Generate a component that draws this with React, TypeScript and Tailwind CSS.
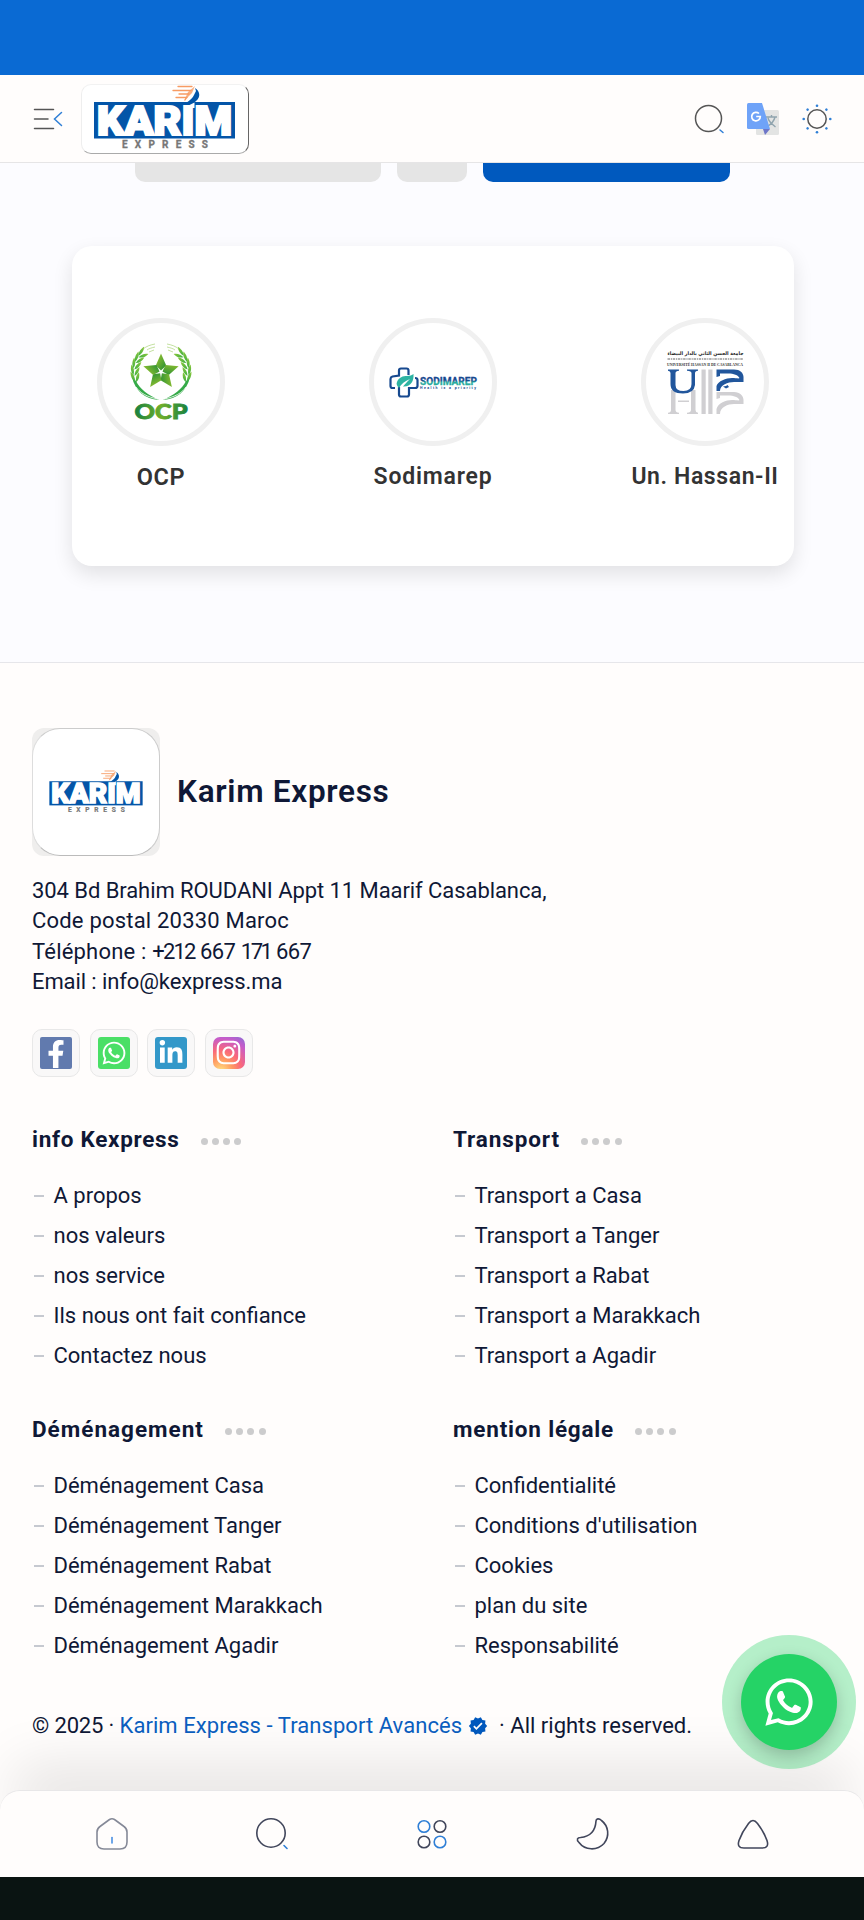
import React from "react";
import { FaFacebookF, FaWhatsapp, FaLinkedinIn, FaInstagram } from "react-icons/fa";
import { MdVerified } from "react-icons/md";

function KarimLogo({ className }: { className: string }) {
  return (
    <svg viewBox="0 0 141 65" className={`overflow-visible ${className}`}>
      <g stroke="#f79b63" strokeWidth="1.3" strokeLinecap="round">
        <path d="M84 1.5H98M79 5.5H97M85 9H95M82 12.5H93M91 15L93 12" />
      </g>
      <path d="M90 16L94 7L101 1L98 8Z" fill="#f79b63" opacity=".8" />
      <path d="M101 3C106 6 107 12 102 16C100 18 98 18 92 18C96 15 99 13 100 10L102 6Z" fill="#0355a8" />
      <rect x="0" y="17" width="141" height="36.5" fill="#0355a8" />
      <text
        x="3"
        y="50.2"
        textLength="135"
        lengthAdjust="spacingAndGlyphs"
        fill="#fff"
        stroke="#fff"
        strokeWidth="2.2"
        className="font-['Roboto'] text-[41px] font-black"
      >
        KARIM
      </text>
      <path d="M91.500 22L100.500 17.500V23H91.500Z" fill="#fff" />
      <text
        x="28"
        y="63.2"
        textLength="86"
        lengthAdjust="spacing"
        fill="#777"
        stroke="#777"
        strokeWidth=".3"
        className="font-['Roboto'] text-[10px] font-bold"
      >
        EXPRESS
      </text>
    </svg>
  );
}

function OcpLogo() {
  const leaves = [0, 1, 2, 3, 4];
  return (
    <svg viewBox="0 0 60 78" className="h-[78px] w-[60px] overflow-visible">
      <defs>
        <linearGradient id="ocpWreath" x1="0" y1="0" x2="0" y2="1">
          <stop offset="0" stopColor="#8cc63a" />
          <stop offset="1" stopColor="#3fb044" />
        </linearGradient>
        <linearGradient id="ocpText" x1="0" y1="0" x2="1" y2="0">
          <stop offset="0" stopColor="#16813f" />
          <stop offset=".5" stopColor="#6fae2c" />
          <stop offset="1" stopColor="#16813f" />
        </linearGradient>
        <linearGradient id="ocpStar" x1="0" y1="0" x2="1" y2="1">
          <stop offset="0" stopColor="#a3c92f" />
          <stop offset="1" stopColor="#208b35" />
        </linearGradient>
        <g id="ocpBranch">
          <path d="M1 34C4 48 14 56 28 57C17 52 9 46 5 38Z" fill="#35aa48" />
          <path d="M5 44C9 50 16 54 27 56" stroke="#fff" strokeWidth=".8" fill="none" />
          {leaves.map((i) => (
            <g key={i} transform={`rotate(${i * 14 - 14} 30 29)`}>
              <path d="M2.500 32C-.5 29 -.5 25 .5 21.500C3 24 3.600 28 2.500 32Z" fill="url(#ocpWreath)" />
              <path d="M3.500 33C3.600 29 5 26 8.500 24C8.500 28 7 31 3.500 33Z" fill="url(#ocpWreath)" />
            </g>
          ))}
          <path d="M12 6C16 3 19 2 24 1M16 7C18 5.500 20 5 24 4M18 9L23 7" stroke="#9bcb60" strokeWidth=".6" fill="none" />
        </g>
      </defs>
      <use href="#ocpBranch" />
      <use href="#ocpBranch" transform="translate(60 0) scale(-1 1)" />
      {[0, 72, 144, 216, 288].map((a) => (
        <path
          key={a}
          d="M30 10.500L35.200 22.500L30 27.500L24.800 22.500Z"
          fill="url(#ocpStar)"
          transform={`rotate(${a} 30 29)`}
        />
      ))}
      <text
        x="3.5"
        y="76"
        textLength="53"
        lengthAdjust="spacingAndGlyphs"
        fill="url(#ocpText)"
        stroke="url(#ocpText)"
        strokeWidth=".8"
        className="font-['Lato'] text-[20px] font-black"
      >
        OCP
      </text>
    </svg>
  );
}

function SodimarepLogo() {
  return (
    <svg viewBox="0 0 88 31" className="h-[31px] w-[88px] overflow-visible">
      <defs>
        <linearGradient id="sodi" x1="0" y1="0" x2="0" y2="1">
          <stop offset=".45" stopColor="#17498f" />
          <stop offset=".6" stopColor="#27ab9f" />
        </linearGradient>
      </defs>
      <path
        d="M19.5 8V3.5C19.5 2 19 1.5 17.5 1.5H12C10.500 1.5 10 2 10 3.500V8.500L3.500 9.500C2 10 1.500 10.500 1.500 12V19C1.500 20.500 2 21 3.500 21H6M10 20V27.500C10 29 10.500 29.500 12 29.500H18C19.500 29.500 20 29 20 27.500V21H26C27.500 21 28.500 20.500 28.500 19V13C28.500 11.500 28 11 26 11"
        fill="none"
        stroke="#17498f"
        strokeWidth="2.2"
      />
      <path d="M8 15C10 10 14 9 18 9C21 9 23 8 24.500 7C25 14 22 20 14 19.500C16 17 18 15 21 12C16 14 12 17 10 21C8 19 7 17 8 15Z" fill="#2db3a2" />
      <text
        x="31"
        y="17.500"
        textLength="57"
        lengthAdjust="spacingAndGlyphs"
        fill="url(#sodi)"
        stroke="url(#sodi)"
        strokeWidth=".3"
        className="font-['Roboto'] text-[10.500px] font-bold"
      >
        SODIMAREP
      </text>
      <text x="31" y="21.500" textLength="56" fill="#17498f" className="font-['Roboto'] text-[3.500px] font-bold">
        Health is a priority
      </text>
    </svg>
  );
}

function HassanLogo() {
  return (
    <svg viewBox="0 0 77 65" className="h-[65px] w-[77px] overflow-visible">
      <text
        x="38.500"
        y="4.500"
        direction="rtl"
        textAnchor="middle"
        textLength="76"
        lengthAdjust="spacingAndGlyphs"
        fill="#222"
        className="font-['DejaVu_Sans'] text-[5px] font-bold"
      >
        جامعة الحسن الثاني بالدار البيضاء
      </text>
      <path d="M.5 9H76" stroke="#999" strokeWidth="1.500" strokeDasharray="2.500 .8 1.200 .7" />
      <text
        x="0"
        y="15.800"
        textLength="76"
        lengthAdjust="spacingAndGlyphs"
        fill="#333"
        className="font-['Liberation_Serif'] text-[4.500px] font-bold"
      >
        UNIVERSITÉ HASSAN II DE CASABLANCA
      </text>
      <g fill="#d0cfd2">
        <path d="M4 40H8.500V60Q8.500 62.500 12 62.800V64H1V62.800Q4 62.500 4 60ZM24 40H28.500V60Q28.500 62.500 31 62.800V64H20V62.800Q24 62.500 24 60ZM11 50.500H22V52H11Z" />
        <path d="M34.500 19.500H38.700V64H34.500ZM41.300 19.500H45.500V64H41.300Z" />
        <path d="M49.500 42H67C73 42 76.500 46 76.500 50V54H67C61 54 53 57 53 64H49.500V59C51 53 59 50 65 50C69 50 72 51 72.500 50C71 47 67 45.500 61 45.500H53V48L49.500 49Z" />
      </g>
      <g fill="#21569c">
        <path d="M1 19.500H12V20.700Q8.500 21 8.500 23V35Q8.500 41 16.500 41Q24.500 41 24.500 34V23Q24.500 21 20 20.700V19.500H31V20.700Q28 21 28 23V35Q27 43.500 16 43.500Q3.500 43.500 3.500 34V23Q3.500 21 1 20.700Z" />
        <path d="M49.500 19.500H67C73 19.500 76.500 23 76.500 27V32H67C61 32 53 35 53 41H49.500V36C51 31 59 28 65 28C69 28 72 29 72.500 28C71 25 67 23.500 61 23.500H53V26L49.500 27ZM56 36.500L59 36L60.500 35L62 37L59 38.500Z" />
      </g>
    </svg>
  );
}

const partners = [
  { name: "OCP", logo: <OcpLogo />, track: "tracking-[0.6px] text-[23.500px]" },
  { name: "Sodimarep", logo: <SodimarepLogo />, track: "tracking-[0.8px] text-[23px]" },
  { name: "Un. Hassan-II", logo: <HassanLogo />, track: "tracking-[0.6px] text-[23px]" },
];

const menus = [
  {
    title: "info Kexpress",
    track: "tracking-[0.7px]",
    items: ["A propos", "nos valeurs", "nos service", "Ils nous ont fait confiance", "Contactez nous"],
  },
  {
    title: "Transport",
    track: "tracking-[0.88px]",
    items: ["Transport a Casa", "Transport a Tanger", "Transport a Rabat", "Transport a Marakkach", "Transport a Agadir"],
  },
  {
    title: "Déménagement",
    track: "tracking-[1px]",
    items: ["Déménagement Casa", "Déménagement Tanger", "Déménagement Rabat", "Déménagement Marakkach", "Déménagement Agadir"],
  },
  {
    title: "mention légale",
    track: "tracking-[0.8px]",
    items: ["Confidentialité", "Conditions d'utilisation", "Cookies", "plan du site", "Responsabilité"],
  },
];

function Header() {
  return (
    <header className="flex h-[88px] shrink-0 items-center border-b border-[#e6e5e6] bg-[#fffdfc] pl-8 pr-[31px]">
      <svg viewBox="0 0 32 32" className="h-8 w-8" fill="none" strokeWidth="1.500" strokeLinecap="round">
        <path d="M2.500 6.500H21.500M2.500 16H16M2.500 25.500H21.500" stroke="#555" />
        <path d="M29.500 9.500L22.500 16L29.500 22.500" stroke="#2f7fd6" />
      </svg>
      <div className="ml-[17px] flex h-[70px] w-[168px] justify-center rounded-[10px] border border-b-[#aaa] border-l-[#eee] border-r-[#666] border-t-[#f2f2f2] bg-white pr-[1px]">
        <KarimLogo className="h-[65px] w-[141px]" />
      </div>
      <div className="ml-auto flex items-center">
        <svg viewBox="0 0 32 32" className="mr-[22px] h-8 w-8" fill="none" strokeWidth="1.500" strokeLinecap="round">
          <circle cx="15.500" cy="15.500" r="13" stroke="#555" />
          <path d="M27 27L30 29.500" stroke="#2f7fd6" />
        </svg>
        <svg viewBox="0 0 32 32" className="mr-[22px] h-8 w-8">
          <rect x="9" y="7" width="23" height="25" rx="1.500" fill="#e3e4e3" />
          <path d="M19 14H30M24.500 12V14M28 14C27 19 23 22 19.500 24M21 15C22 19 25 21 28.500 24" stroke="#90a4ae" strokeWidth="1.400" fill="none" />
          <path d="M16 26H23L18 32Z" fill="#6e76c8" />
          <path d="M1.500 0H15L23 26H1.500Q0 26 0 24.500V1.500Q0 0 1.500 0Z" fill="#6fa3f8" />
          <path d="M12 10.500A4.300 4.300 0 1 0 13.300 13.500H9.200" stroke="#fff" strokeWidth="1.700" fill="none" />
        </svg>
        <svg viewBox="0 0 32 32" className="h-8 w-8">
          <circle cx="16" cy="16" r="9.200" stroke="#555" strokeWidth="1.500" fill="none" />
          <g fill="#2f7fd6">
            {[0, 45, 90, 135, 180, 225, 270, 315].map((a) => (
              <circle key={a} cx="16" cy="2.700" r="1.300" transform={`rotate(${a} 16 16)`} />
            ))}
          </g>
        </svg>
      </div>
    </header>
  );
}

function Partners() {
  return (
    <main className="h-[499px] shrink-0">
      <div className="flex h-[18.500px] justify-center gap-4 pl-[1px]">
        <div className="w-[246px] rounded-b-[10px] bg-[#e5e5e5]" />
        <div className="w-[70px] rounded-b-[10px] bg-[#e5e5e5]" />
        <div className="w-[247px] rounded-b-[10px] bg-[#0059be]" />
      </div>
      <section className="ml-[72px] mt-[64.500px] flex h-[319.500px] w-[722px] gap-[72px] rounded-[20px] bg-white pt-[72px] shadow-[0_8px_20px_rgba(0,0,0,0.11)]">
        {partners.map((p) => (
          <div key={p.name} className="-ml-[11px] mr-[11px] flex w-[200px] shrink-0 flex-col items-center">
            <div className="flex h-[128px] w-[128px] items-center justify-center rounded-full border-[5px] border-[#f0f0f0] bg-white">
              {p.logo}
            </div>
            <div className={`mt-[16px] whitespace-nowrap font-semibold leading-[30px] text-[#333] ${p.track}`}>{p.name}</div>
          </div>
        ))}
      </section>
    </main>
  );
}

function Social() {
  const box = "flex h-12 w-12 items-center justify-center rounded-[10px] border-[1.500px] border-[#e8e8e8] bg-[#f9f8f8]";
  const tile = "flex h-8 w-8 items-center justify-center overflow-hidden text-white";
  return (
    <div className="mt-[31px] flex gap-[9.600px]">
      <div className={box}>
        <div className={`${tile} rounded-[2px] bg-[#617aae]`}>
          <FaFacebookF className="mt-[2px] h-[28px] w-[24px]" />
        </div>
      </div>
      <div className={box}>
        <div className={`${tile} rounded-[3px] bg-[#4adf66]`}>
          <FaWhatsapp className="h-[26px] w-[26px]" />
        </div>
      </div>
      <div className={box}>
        <div className={`${tile} rounded-[3px] bg-[#3398c9]`}>
          <FaLinkedinIn className="h-[26px] w-[26px]" />
        </div>
      </div>
      <div className={box}>
        <div className={`${tile} rounded-[7px] bg-[radial-gradient(circle_at_25%_105%,#ffe080_0%,#ff9a62_28%,#f9687b_50%,#c65bc9_78%,#6976dd_110%)]`}>
          <FaInstagram className="h-[27px] w-[27px]" />
        </div>
      </div>
    </div>
  );
}

function Footer() {
  return (
    <footer className="flex-1 border-t border-[#e6e6ea] bg-[#fffdfc] px-8 pt-[65px] text-[#0f1836]">
      <div className="flex items-center gap-[17px]">
        <div className="h-32 w-32 rounded-[12px] bg-[#efeeed]">
          <div className="flex h-32 w-32 items-center justify-center rounded-[28px] border border-b-[#bbb] border-l-[#ddd] border-r-[#ccc] border-t-[#ccc] bg-white">
            <KarimLogo className="mb-[2px] h-[43px] w-[94px]" />
          </div>
        </div>
        <h2 className="text-[31.500px] font-semibold tracking-[0.7px]">Karim Express</h2>
      </div>
      <address className="mt-[20px] text-[22px] not-italic leading-[30.400px]">
        <div className="tracking-[-0.07px]">304 Bd Brahim ROUDANI Appt 11 Maarif Casablanca,</div>
        <div className="tracking-[0.2px]">Code postal 20330 Maroc</div>
        <div>
          <span className="tracking-[0.2px]">Téléphone : </span>
          <span className="tracking-[-1.800px]">+212</span> <span className="tracking-[-0.6px]">667</span>{" "}
          <span className="tracking-[-2.500px]">171</span> <span className="tracking-[-0.6px]">667</span>
        </div>
        <div className="tracking-[-0.1px]">Email : info@kexpress.ma</div>
      </address>
      <Social />
      <div className="mt-[49px] grid grid-cols-[421px_1fr] gap-y-[40px]">
        {menus.map((m) => (
          <section key={m.title} className="h-[250px]">
            <div className="flex h-7 items-center">
              <h3 className={`text-[22.500px] font-bold ${m.track}`}>{m.title}</h3>
              <div className="ml-[21px] mt-1 flex gap-[4.200px]">
                {[0, 1, 2, 3].map((d) => (
                  <i key={d} className="h-[7px] w-[7px] rounded-full bg-[#cccccd]" />
                ))}
              </div>
            </div>
            <ul className="mt-[22px] text-[22px] leading-[40px]">
              {m.items.map((t) => (
                <li key={t} className="flex h-10 items-center whitespace-nowrap">
                  <i className="ml-[1.500px] mr-[9.500px] h-[2px] w-[10.500px] bg-[#c6c9d0]" />
                  {t}
                </li>
              ))}
            </ul>
          </section>
        ))}
      </div>
      <p className="mt-[45px] flex items-center whitespace-nowrap text-[22px] leading-[30px]">
        <span className="tracking-[-0.15px]">© 2025 ·&nbsp;</span>
        <span className="tracking-[0.06px] text-[#0b5fc0]">Karim Express - Transport Avancés</span>
        <MdVerified className="ml-[6px] h-[20px] w-[20px] text-[#0059be]" />
        <span className="ml-[11px]">· All rights reserved.</span>
      </p>
    </footer>
  );
}

function BottomNav() {
  const cls = "h-9 w-9";
  return (
    <nav className="absolute inset-x-0 bottom-[43px] flex h-[87px] items-center rounded-t-[20px] border-t border-[#e8e7e8] bg-[#fffdfc] pl-[32px] pr-[31px] shadow-[0_-40px_55px_-15px_rgba(0,0,0,0.1)]">
      <div className="grid w-full grid-cols-5 justify-items-center">
        <svg viewBox="0 0 36 36" className={cls} fill="none" strokeWidth="1.600" strokeLinecap="round">
          <path d="M15.500 3.500Q18 2 20.500 3.500L30 10.500Q33 12.500 33 16V26Q33 33 26 33H10Q3 33 3 26V16Q3 12.500 6 10.500Z" stroke="#858997" />
          <path d="M18 21.500V27" stroke="#4a90e2" />
        </svg>
        <svg viewBox="0 0 36 36" className={cls} fill="none" strokeWidth="1.600" strokeLinecap="round">
          <circle cx="17" cy="17" r="14.200" stroke="#41465b" />
          <path d="M30 29.500L33 32.500" stroke="#2f7fd6" />
        </svg>
        <svg viewBox="0 0 36 36" className={cls} fill="none" strokeWidth="1.600">
          <circle cx="10" cy="10.500" r="5.800" stroke="#2f7fd6" />
          <circle cx="26" cy="10.500" r="5.800" stroke="#41465b" />
          <circle cx="10" cy="26" r="5.800" stroke="#41465b" />
          <circle cx="26" cy="26" r="5.800" stroke="#2f7fd6" />
        </svg>
        <svg viewBox="0 0 36 36" className={cls} fill="none" stroke="#41465b" strokeWidth="1.600">
          <path d="M21 5C21 2.500 24 2 26.500 4.500C33.500 10 35 20 29 27.500C22 35 10 34.500 4 26.500C1 23.500 2.500 21.500 5.500 21.500C15.500 20.500 20.500 14 21 5Z" />
        </svg>
        <svg viewBox="0 0 36 36" className={cls} fill="none" stroke="#41465b" strokeWidth="1.600">
          <path d="M13.500 7.500Q18 1.500 22.500 7.500Q29 16 32 24.500Q34.500 32 27 32H9Q1.500 32 4 24.500Q7 16 13.500 7.500Z" />
        </svg>
      </div>
    </nav>
  );
}

export default function App() {
  return (
    <div className="relative flex h-[1920px] w-[864px] flex-col overflow-hidden bg-[#fcfcff] font-['Roboto',sans-serif]">
      <div className="h-[75px] shrink-0 bg-[#0a6ad3]" />
      <Header />
      <Partners />
      <Footer />
      <BottomNav />
      <a className="absolute right-[8px] bottom-[151px] flex h-[134px] w-[134px] items-center justify-center rounded-full bg-[#25d366]/34">
        <span className="flex h-24 w-24 items-center justify-center rounded-full bg-[#25d366] text-white shadow-[0_6px_16px_rgba(0,0,0,0.2)]">
          <FaWhatsapp className="h-[54px] w-[54px]" />
        </span>
      </a>
      <div className="absolute inset-x-0 bottom-0 h-[43px] bg-[#0a1412]" />
    </div>
  );
}
